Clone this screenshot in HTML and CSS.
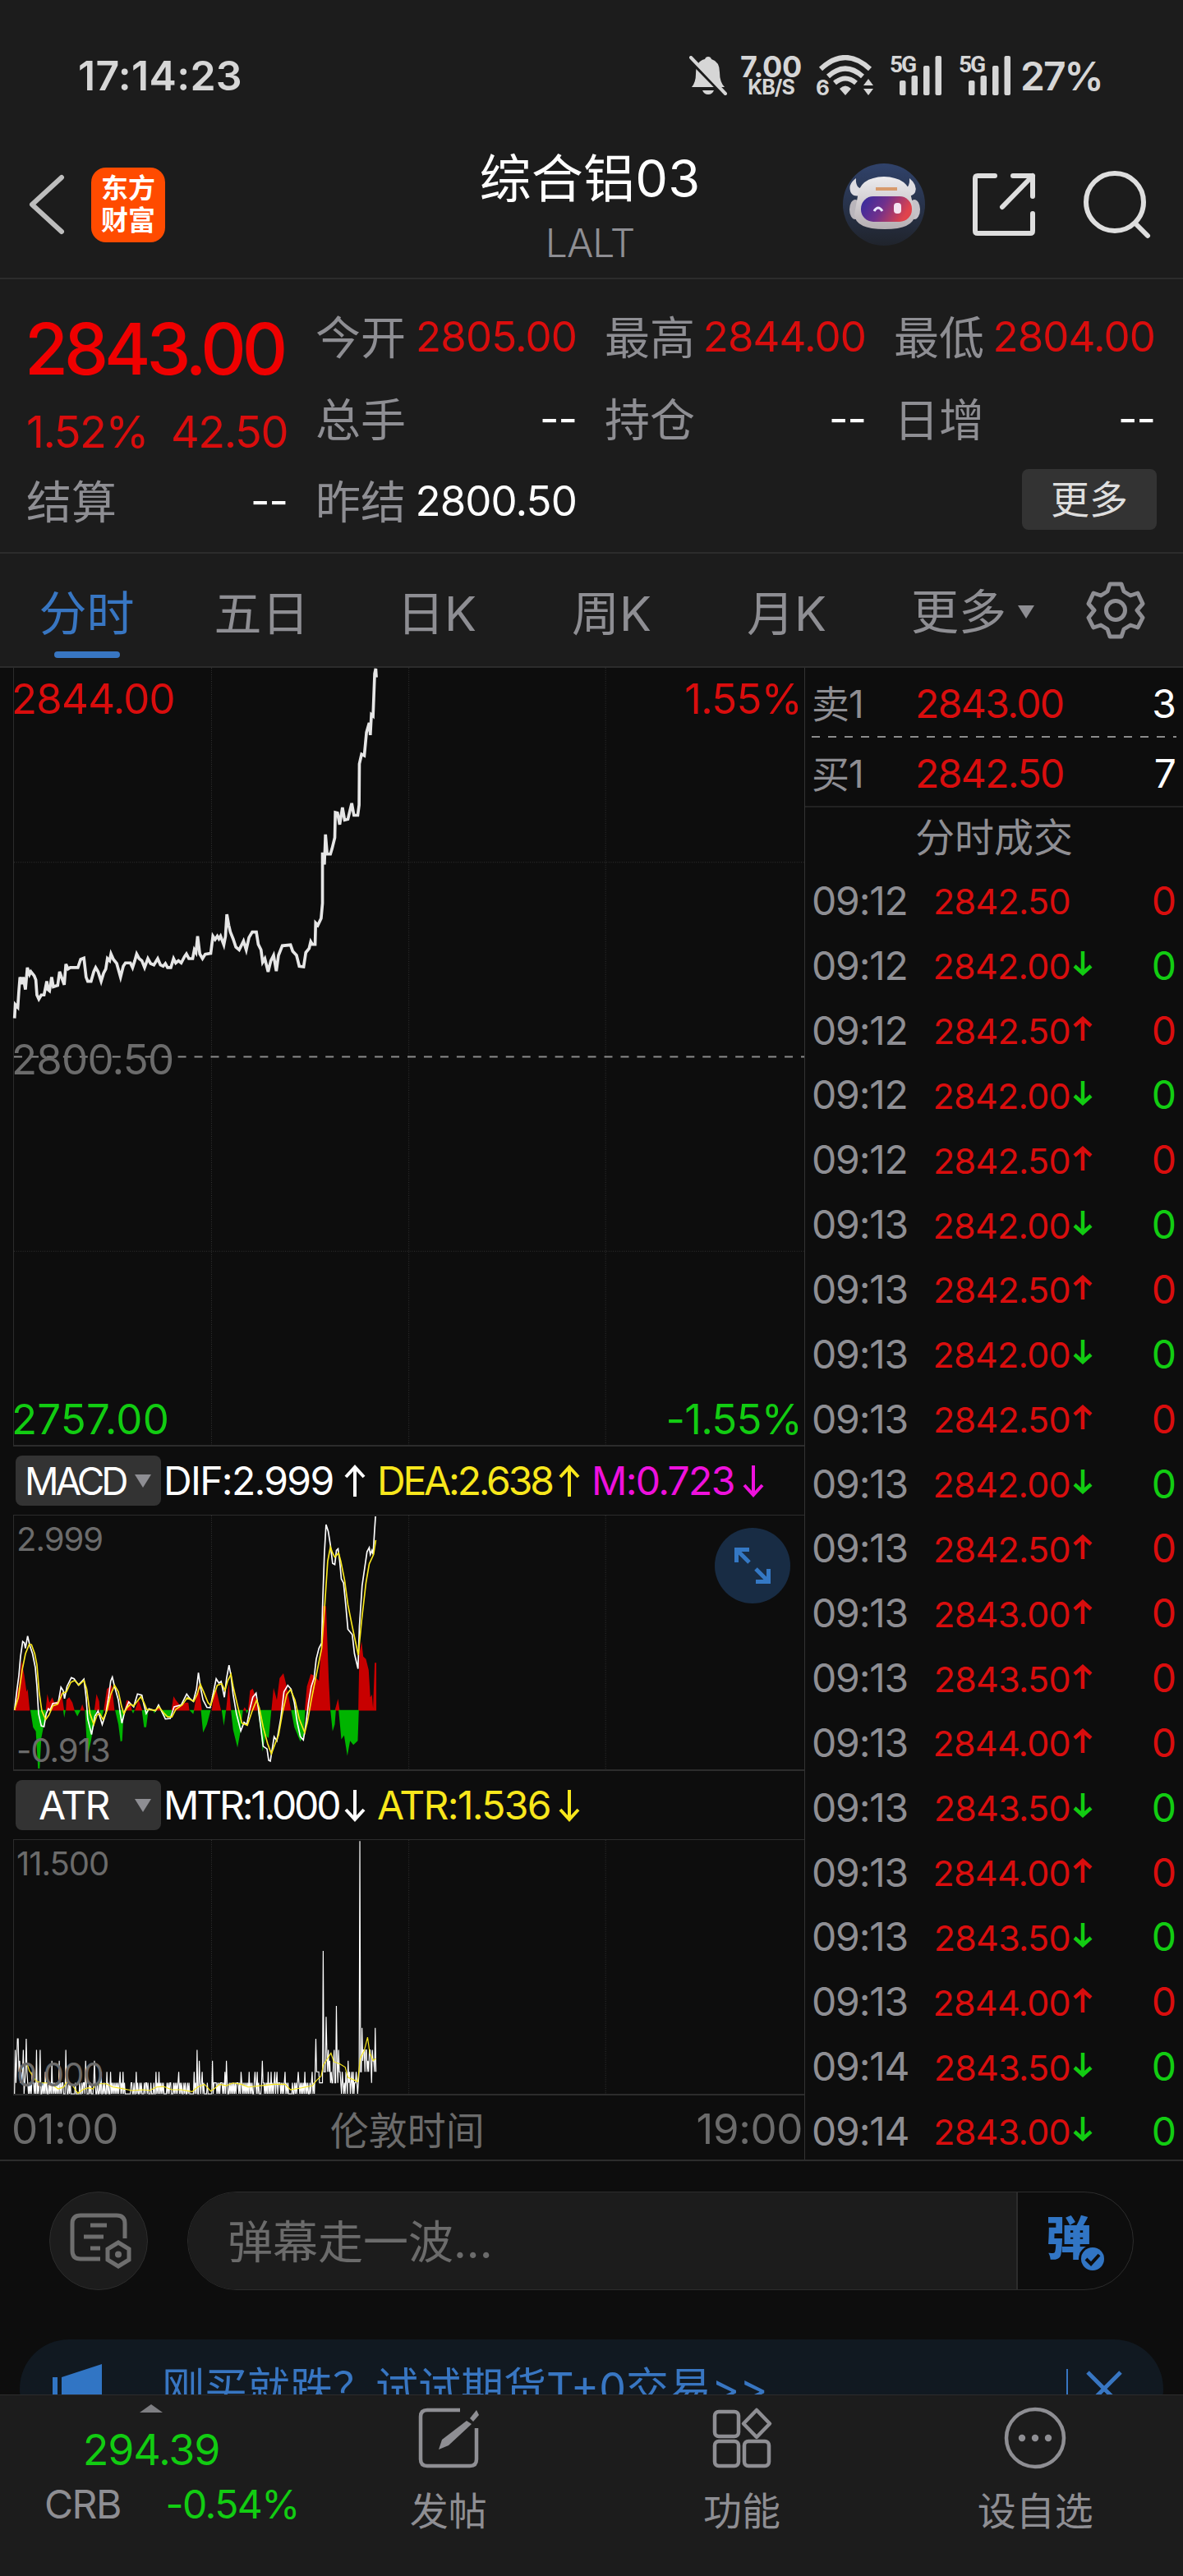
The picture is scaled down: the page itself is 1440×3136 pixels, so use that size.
FILE: index.html
```html
<!DOCTYPE html>
<html lang="zh-CN">
<head>
    <meta charset="UTF-8">
    <meta name="viewport" content="width=device-width, initial-scale=1.0">
    <title>综合铝03 - LALT</title>
    <link rel="stylesheet" href="styles.css">
</head>
<body>

    <div class="status-bar">
        <span class="clock">17:14:23</span>
        <div class="status-icons">
            <svg class="bell" width="46" height="48" viewBox="0 0 46 48">
                <path d="M3 38 Q8 32 8 22 Q8 6 19 4 Q20 1 23 1 Q26 1 27 4 Q37 7 37 20 Q37 32 43 38 Z" fill="#d6d6d6"/>
                <path d="M16 42 H30 Q28 47 23 47 Q18 47 16 42 Z" fill="#d6d6d6"/>
                <path d="M1 -3 L46 43" stroke="#1c1c1c" stroke-width="5" transform="translate(-3 5)"/>
                <path d="M2 2 L44 46" stroke="#d6d6d6" stroke-width="4" stroke-linecap="round"/>
            </svg>
            <div class="net-speed">
                <span class="speed">7.00</span>
                <span class="unit">KB/S</span>
            </div>
            <div class="wifi">
                <span>6</span>
                <svg width="70" height="50" viewBox="0 0 70 50" fill="none" stroke="#d6d6d6" stroke-width="6">
                    <path d="M4 17 Q34 -11 64 17"/>
                    <path d="M13 26 Q34 7 55 26"/>
                    <path d="M21 34 Q34 23 47 34"/>
                    <path d="M27 41 Q34 34 41 41 L34 49 Z" fill="#d6d6d6" stroke="none"/>
                    <path d="M62 29 L68 37 H56 Z M62 49 L68 41 H56 Z" fill="#d6d6d6" stroke="none"/>
                </svg>
            </div>
            <div class="signal">
                <span>5G</span>
                <svg width="52" height="48" viewBox="0 0 52 48" fill="#d6d6d6">
                    <rect x="0" y="30" width="7.500" height="18" rx="2"/><rect x="14.500" y="24" width="7.500" height="24" rx="2"/>
                    <rect x="29" y="12" width="7.500" height="36" rx="2"/><rect x="43.500" y="0" width="7.500" height="48" rx="2"/>
                </svg>
            </div>
            <div class="signal">
                <span>5G</span>
                <svg width="52" height="48" viewBox="0 0 52 48" fill="#d6d6d6">
                    <rect x="0" y="30" width="7.500" height="18" rx="2"/><rect x="14.500" y="24" width="7.500" height="24" rx="2"/>
                    <rect x="29" y="12" width="7.500" height="36" rx="2"/><rect x="43.500" y="0" width="7.500" height="48" rx="2"/>
                </svg>
            </div>
            <span class="battery">27%</span>
        </div>
    </div>

    <header class="header">
        <div class="header-left">
            <svg width="46" height="76" viewBox="0 0 46 76" fill="none" stroke="#bdbdbd" stroke-width="6" stroke-linecap="round" stroke-linejoin="round">
                <path d="M41 5 L5 38 L41 71"/>
            </svg>
            <div class="logo"><span>东方</span><span>财富</span></div>
        </div>
        <div class="header-title">
            <h1>综合铝03</h1>
            <p>LALT</p>
        </div>
        <div class="header-right">
            <svg width="100" height="100" viewBox="0 0 100 100">
                <defs>
                    <linearGradient id="sky" x1="0" y1="0" x2="0" y2="1">
                        <stop offset="0" stop-color="#30426a"/><stop offset="1" stop-color="#20242c"/>
                    </linearGradient>
                    <linearGradient id="visor" x1="0" y1="0" x2="1" y2="0.300">
                        <stop offset="0" stop-color="#2f2ba0"/><stop offset="0.500" stop-color="#70308c"/><stop offset="1" stop-color="#e0434c"/>
                    </linearGradient>
                    <linearGradient id="shell" x1="0" y1="0" x2="0" y2="1">
                        <stop offset="0" stop-color="#ecebee"/><stop offset="1" stop-color="#b5aeb2"/>
                    </linearGradient>
                </defs>
                <circle cx="50" cy="50" r="50" fill="url(#sky)"/>
                <path d="M16 18 Q5 26 10 36 Q14 42 24 38 L24 31 Q15 30 16 18 Z M81 18 Q91 26 88 35 Q84 42 74 38 L74 31 Q82 30 81 18 Z" fill="#dddce2"/>
                <ellipse cx="15" cy="56" rx="7" ry="12" fill="#b9b5bb"/>
                <ellipse cx="87" cy="56" rx="7" ry="12" fill="#c6c2c8"/>
                <path d="M18 40 Q20 17 50 16 Q80 17 83 40 L88 62 Q86 80 51 80 Q15 80 14 62 Z" fill="url(#shell)"/>
                <path d="M40 31 H66" stroke="#d79a6c" stroke-width="4"/>
                <rect x="22" y="40" width="62" height="31" rx="15" fill="url(#visor)"/>
                <path d="M38 58 Q43 50 48 58" fill="none" stroke="#e8e6ff" stroke-width="3"/>
                <rect x="62" y="48" width="9" height="13" rx="4" fill="#f4e4f2"/>
            </svg>
            <svg width="80" height="80" viewBox="0 0 80 80" fill="none" stroke="#dedede" stroke-width="6" stroke-linecap="round" stroke-linejoin="round">
                <path d="M29 5 H8 Q5 5 5 8 V72 Q5 75 8 75 H72 Q75 75 75 72 V51"/>
                <path d="M51 5 H75 V30 M75 5 L38 43"/>
            </svg>
            <svg width="84" height="84" viewBox="0 0 84 84" fill="none" stroke="#dedede" stroke-width="6" stroke-linecap="round">
                <circle cx="39" cy="39" r="35"/>
                <path d="M64 65 L79 80"/>
            </svg>
        </div>
    </header>

    <section class="quote">
        <div class="price-main">
            <strong>2843.00</strong>
            <div class="change"><span>1.52%</span><span>42.50</span></div>
        </div>
        <div class="cell"><label>今开</label><span class="red">2805.00</span></div>
        <div class="cell"><label>最高</label><span class="red">2844.00</span></div>
        <div class="cell"><label>最低</label><span class="red">2804.00</span></div>
        <div class="cell"><label>总手</label><span>--</span></div>
        <div class="cell"><label>持仓</label><span>--</span></div>
        <div class="cell"><label>日增</label><span>--</span></div>
        <div class="cell"><label>结算</label><span>--</span></div>
        <div class="cell"><label>昨结</label><span>2800.50</span></div>
        <button class="more-btn">更多</button>
    </section>

    <nav class="tabs">
        <a class="tab active">分时</a>
        <a class="tab">五日</a>
        <a class="tab">日K</a>
        <a class="tab">周K</a>
        <a class="tab">月K</a>
        <a class="tab tab-more">更多<i class="caret"></i></a>
        <svg class="gear" width="72" height="72" viewBox="0 0 72 72" fill="none" stroke="#8e8e93" stroke-width="5" stroke-linejoin="round">
            <path d="M29 4 H43 L46 13 L54 18 L63 15 L69 28 L62 36 L69 45 L63 57 L54 54 L46 59 L43 68 H29 L26 59 L18 54 L9 57 L3 45 L10 36 L3 28 L9 15 L18 18 L26 13 Z"/>
            <circle cx="36" cy="36" r="11.500"/>
        </svg>
    </nav>

    <main class="board">
        <div class="charts">
            <div class="plot plot-price">
                <svg viewBox="48 9 2892 2841" preserveAspectRatio="none">
                    <path class="grid" d="M771 9 V2850 M1493 9 V2850 M2213 9 V2850 M48 720 H2940 M48 2142 H2940"/>
                    <path class="base" d="M48 1431 H2940"/>
                    <polyline class="price-line" points="50,1290 53,1240 62,1250 66,1190 70,1140 78,1165 82,1140 90,1185 97,1105 105,1130 110,1120 122,1135 128,1150 132,1205 139,1220 148,1205 158,1205 168,1155 172,1185 178,1190 186,1140 192,1175 208,1170 215,1120 222,1140 232,1168 238,1092 246,1110 254,1105 282,1105 292,1075 304,1070 312,1140 318,1155 330,1155 340,1120 347,1105 356,1120 367,1155 376,1125 384,1110 390,1072 398,1080 403,1055 412,1075 424,1090 438,1140 448,1100 456,1088 474,1088 482,1105 490,1080 497,1055 506,1072 516,1080 526,1105 538,1072 548,1090 560,1095 574,1072 584,1095 594,1100 602,1090 610,1105 622,1105 632,1072 640,1088 650,1080 660,1088 672,1065 679,1055 688,1072 702,1072 708,1040 714,1050 720,990 728,1055 738,1072 748,1056 768,1053 776,990 784,1002 792,990 798,1000 804,990 816,1022 822,990 827,910 834,950 840,975 850,1000 860,1030 872,1040 888,1008 898,1040 908,995 920,975 935,975 942,1020 952,1040 958,1085 966,1072 978,1120 988,1080 998,1060 1008,1118 1016,1060 1030,1025 1060,1022 1068,1045 1082,1060 1092,1100 1108,1102 1116,1050 1128,1035 1134,1010 1140,1020 1150,1020 1152,942 1160,950 1172,925 1177,870 1177,684 1184,728 1188,618 1194,690 1206,690 1212,670 1222,630 1224,538 1232,540 1240,582 1250,520 1258,565 1270,562 1284,504 1292,548 1306,548 1311,510 1312,360 1320,325 1330,330 1338,245 1348,210 1352,255 1356,180 1362,185 1368,30 1372,12 1374,44"/>
                </svg>
                <span class="mark top-left red">2844.00</span>
                <span class="mark top-right red">1.55%</span>
                <span class="mark mid-left">2800.50</span>
                <span class="mark bottom-left green">2757.00</span>
                <span class="mark bottom-right green">-1.55%</span>
            </div>

            <div class="indicator">
                <div class="picker picker-macd">MACD<i class="caret"></i></div>
                <span class="val v1">DIF:2.999</span>
                <svg class="arrow" viewBox="0 0 26 40"><path d="M13 39 V3 M2 15 L13 3 L24 15"/></svg>
                <span class="val v2 tight yellow">DEA:2.638</span>
                <svg class="arrow yellow" viewBox="0 0 26 40"><path d="M13 39 V3 M2 15 L13 3 L24 15"/></svg>
                <span class="val v3 pink">M:0.723</span>
                <svg class="arrow pink" viewBox="0 0 26 40"><path d="M13 1 V37 M2 25 L13 37 L24 25"/></svg>
            </div>
            <div class="plot plot-sub">
                <svg viewBox="48 12 2892 933" preserveAspectRatio="none">
                    <path class="grid" d="M771 12 V945 M1493 12 V945 M2213 12 V945"/>
                    <path fill="#c80000" d="M50 729 L58 660 66 640 76 545 86 600 94 660 98 650 106 729 Z M164 729 L170 668 178 700 188 680 196 700 214 690 218 650 226 690 232 729 Z M238 729 L240 690 250 680 262 700 270 729 Z M290 729 L298 706 306 729 Z M342 729 L350 668 360 695 362 729 Z M376 729 L388 650 406 635 416 729 Z M452 729 L460 690 472 695 480 729 Z M490 729 L504 690 518 729 Z M570 729 L577 712 584 729 Z M624 729 L632 676 640 690 656 710 676 700 686 700 690 729 Z M706 729 L723 635 732 700 736 729 Z M772 729 L780 660 788 650 806 729 Z M824 729 L834 630 842 729 Z M886 729 L892 716 900 729 Z M904 729 L912 655 922 648 936 690 940 729 Z M990 729 L998 645 1010 690 1020 610 1034 592 1046 640 1062 729 Z M1112 729 L1120 640 1134 595 1146 600 1164 620 1172 500 1178 345 1190 345 1200 620 1206 729 Z M1222 729 L1234 685 1240 729 Z M1308 729 L1312 520 1320 475 1326 530 1336 540 1346 580 1352 680 1358 670 1362 720 1368 553 1374 553 1374 729 Z"/>
                    <path fill="#00b400" d="M108 727 L118 790 128 805 136 942 142 942 148 830 160 770 166 727 Z M228 727 L232 755 237 727 Z M268 727 L280 750 292 727 Z M308 727 L314 840 320 885 330 840 340 780 350 727 Z M362 727 L368 760 376 727 Z M418 727 L430 780 438 843 444 840 450 727 Z M478 727 L484 740 490 727 Z M516 727 L524 790 532 790 540 727 Z M556 727 L562 740 568 727 Z M584 727 L596 750 620 755 626 727 Z M690 727 L704 742 708 727 Z M732 727 L740 810 754 780 768 727 Z M808 727 L816 785 824 727 Z M842 727 L850 800 866 865 876 810 886 727 Z M896 727 L900 740 906 727 Z M940 727 L950 800 958 880 968 820 980 830 990 727 Z M1062 727 L1074 790 1096 843 1108 820 1114 727 Z M1206 727 L1214 805 1222 780 1226 727 Z M1236 727 L1246 835 1256 820 1268 895 1278 840 1290 855 1306 840 1310 727 Z"/>
                    <polyline class="line-white" points="50,727 58,660 66,600 72,530 80,475 86,480 90,500 98,455 106,490 116,520 126,570 132,640 138,740 148,785 158,788 166,740 174,722 180,728 190,703 210,700 220,643 228,655 233,685 242,640 258,608 268,612 284,635 304,613 312,680 318,760 332,817 344,750 356,730 371,780 384,740 394,680 402,620 408,606 416,640 430,690 437,740 443,775 454,730 468,697 486,715 500,668 516,672 524,710 532,740 542,722 566,730 577,708 590,735 602,760 620,758 634,715 660,708 680,668 692,685 704,695 716,650 723,590 730,640 740,690 754,717 766,718 774,680 788,612 798,628 806,622 818,680 826,610 835,562 842,600 850,670 862,740 878,804 890,772 900,780 912,720 922,680 934,665 942,720 950,780 960,860 974,870 980,912 986,915 1000,825 1010,840 1024,760 1036,660 1050,636 1062,650 1074,700 1084,770 1096,825 1107,837 1116,780 1126,700 1136,640 1146,610 1154,540 1164,500 1174,480 1177,350 1184,150 1190,45 1198,70 1206,120 1214,188 1222,192 1228,140 1234,134 1240,180 1246,245 1254,260 1262,340 1270,430 1286,450 1294,520 1307,575 1312,420 1322,270 1332,200 1340,145 1348,130 1352,155 1358,140 1362,155 1368,60 1371,15"/>
                    <polyline class="line-yellow" points="50,727 64,680 78,580 90,520 104,485 112,487 124,520 132,560 140,660 150,730 164,762 176,745 190,712 208,705 226,665 240,660 256,625 270,618 286,635 304,618 314,650 326,740 340,780 352,745 362,740 374,762 388,730 402,670 416,636 430,660 442,715 450,740 462,718 474,706 486,712 512,678 524,700 534,725 566,728 578,715 594,735 610,752 626,752 640,725 664,708 682,682 706,695 718,670 730,632 742,660 758,700 768,710 780,670 792,636 808,630 820,655 830,620 842,595 850,640 866,710 882,775 902,783 918,735 936,690 946,720 960,790 976,850 990,888 1004,850 1016,820 1030,740 1046,670 1060,652 1076,690 1092,760 1112,810 1122,770 1136,690 1150,620 1162,560 1174,500 1186,330 1196,180 1206,128 1214,150 1222,165 1236,150 1244,180 1258,250 1270,340 1286,420 1308,525 1320,400 1336,260 1348,190 1364,155 1372,102"/>
                </svg>
                <span class="mark small sub-top">2.999</span>
                <span class="mark small sub-bottom">-0.913</span>
                <div class="expand">
                    <svg width="48" height="48" viewBox="0 0 48 48" fill="none" stroke="#3478c4" stroke-width="5">
                        <path d="M20 4.500 H4.500 V20 M4.500 4.500 L20 20 M28 43.500 H43.500 V28 M43.500 43.500 L28 28"/>
                    </svg>
                </div>
            </div>

            <div class="indicator">
                <div class="picker picker-atr">ATR<i class="caret"></i></div>
                <span class="val v1 tight">MTR:1.000</span>
                <svg class="arrow" viewBox="0 0 26 40"><path d="M13 1 V37 M2 25 L13 37 L24 25"/></svg>
                <span class="val v2 yellow">ATR:1.536</span>
                <svg class="arrow yellow" viewBox="0 0 26 40"><path d="M13 1 V37 M2 25 L13 37 L24 25"/></svg>
            </div>
            <div class="plot plot-sub">
                <svg viewBox="48 -3 2892 933" preserveAspectRatio="none">
                    <path class="grid" d="M771 -3 V930 M1493 -3 V930 M2213 -3 V930"/>
                    <polyline id="mtr" class="line-white thin" points=""/>
                    <polyline class="line-yellow thin" points="90,822 98,825 104,845 120,870 132,885 150,890 176,890 190,898 210,912 230,905 240,888 252,890 266,905 282,928 300,915 320,908 336,912 345,900 362,893 385,893 410,905 440,910 480,918 520,915 545,918 570,905 595,903 625,915 660,915 700,922 720,905 745,895 768,920 785,908 800,895 825,900 850,890 880,895 905,905 950,900 1000,895 1040,895 1060,915 1100,908 1140,900 1156,880 1172,865 1180,825 1208,780 1218,812 1240,820 1260,832 1270,870 1306,885 1315,800 1330,770 1342,722 1350,780 1362,808 1372,800"/>
                </svg>
                <span class="mark small sub-top">11.500</span>
                <span class="mark small sub-bottom">0.000</span>
            </div>
            <div class="time-axis"><span>01:00</span><span>伦敦时间</span><span>19:00</span></div>
        </div>

        <aside class="ticks">
            <div class="order"><label>卖1</label><span class="red">2843.00</span><b>3</b></div>
            <svg class="dash" width="460" height="2"><path d="M8 1 H452" stroke="#8c8c8c" stroke-width="2" stroke-dasharray="10 10"/></svg>
            <div class="order"><label>买1</label><span class="red">2842.50</span><b>7</b></div>
            <h2>分时成交</h2>
            <div id="tick-list"></div>
        </aside>
    </main>

    <section class="feed">
        <div class="danmu">
            <div class="danmu-set">
                <svg width="76" height="70" viewBox="0 0 76 70" fill="none" stroke="#6e6e6e" stroke-width="5">
                    <path d="M38 57 H14 Q4 57 4 47 V14 Q4 4 14 4 H58 Q68 4 68 14 V32"/>
                    <path d="M26 16 H46 M18 30 H42 M26 44 H38"/>
                    <path d="M60 37 L73 45 V58 L60 66 L47 58 V45 Z"/>
                    <circle cx="60" cy="51.500" r="4" fill="#6e6e6e" stroke="none"/>
                </svg>
            </div>
            <div class="danmu-box">
                <div class="danmu-input">弹幕走一波...</div>
                <div class="danmu-switch">
                    <span>弹</span>
                    <svg width="34" height="34" viewBox="0 0 34 34">
                        <circle cx="17" cy="17" r="17" fill="#0d0d0d"/>
                        <circle cx="17" cy="17" r="14" fill="#3175c4"/>
                        <path d="M9 17 L15 23 L25 12" fill="none" stroke="#0d0d0d" stroke-width="4"/>
                    </svg>
                </div>
            </div>
        </div>
        <div class="notice">
            <svg class="horn" width="60" height="60" viewBox="0 0 60 60" fill="#3175c4">
                <path d="M0 16 H6 V50 H0 Z M11 16 L60 0 V60 L11 46 Z"/>
            </svg>
            <p>刚买就跌？试试期货T+0交易&gt;&gt;</p>
            <i class="split"></i>
            <svg width="44" height="44" viewBox="0 0 44 44" stroke="#3876c2" stroke-width="5"><path d="M2 2 L42 42 M42 2 L2 42"/></svg>
        </div>
    </section>

    <footer class="bottom-nav">
        <div class="index">
            <i class="caret-up"></i>
            <strong>294.39</strong>
            <div><label>CRB</label><span>-0.54%</span></div>
        </div>
        <a>
            <svg width="76" height="76" viewBox="0 0 76 76" fill="none" stroke="#8e8e93" stroke-width="4.500">
                <path d="M52 4 H12 Q4 4 4 12 V64 Q4 72 12 72 H64 Q72 72 72 64 V26"/>
                <path d="M60 17 L66 21 L38 47 L26 52 L30 40 Z" fill="#8e8e93" stroke="none"/>
                <path d="M64 14 L72 4 L75 10 L68 18 Z" fill="#8e8e93" stroke="none"/>
            </svg>
            <span>发帖</span>
        </a>
        <a>
            <svg width="76" height="76" viewBox="0 0 76 76" fill="none" stroke="#8e8e93" stroke-width="4.500">
                <rect x="5" y="6" width="29" height="30" rx="5"/>
                <rect x="5" y="42" width="29" height="30" rx="5"/>
                <rect x="41" y="42" width="30" height="30" rx="5"/>
                <path d="M56 4 L72 20.500 L56 37 L40 20.500 Z" stroke-linejoin="round"/>
            </svg>
            <span>功能</span>
        </a>
        <a>
            <svg width="76" height="76" viewBox="0 0 76 76" fill="#8e8e93">
                <circle cx="38" cy="38" r="35" fill="none" stroke="#8e8e93" stroke-width="4.500"/>
                <circle cx="22" cy="38" r="4.200"/><circle cx="38" cy="38" r="4.200"/><circle cx="54" cy="38" r="4.200"/>
            </svg>
            <span>设自选</span>
        </a>
    </footer>

    <script src="script.js"></script>
</body>
</html>
```

FILE: styles.css
```css
* {
    box-sizing: border-box;
}

body {
    margin: 0;
    width: 1440px;
    height: 3136px;
    overflow: hidden;
    background-color: #0d0d0d;
    color: #fff;
    font-family: Inter, "Noto Sans CJK SC", sans-serif;
    font-size: 48px;
    font-weight: 400;
    white-space: nowrap;
}

h1, h2, p {
    margin: 0;
    font-weight: 400;
}

svg {
    display: block;
    flex: none;
}

.red {
    color: #d90d0d;
}

.green {
    color: #12cc12;
}

.yellow {
    color: #f8e71c;
}

.pink {
    color: #ee11dd;
}

/* status bar */
.status-bar {
    height: 186px;
    padding: 0 98px 2px 95px;
    display: flex;
    align-items: center;
    justify-content: space-between;
    background-color: #1c1c1c;
    color: #d6d6d6;
}

.clock {
    font-size: 50px;
    font-weight: 600;
    letter-spacing: 0.3px;
}

.status-icons {
    display: flex;
    align-items: center;
}

.net-speed {
    width: 77px;
    margin-left: 15px;
    display: flex;
    flex-direction: column;
    align-items: center;
    font-weight: 700;
}

.speed {
    font-size: 36px;
    line-height: 28px;
    letter-spacing: -0.2px;
}

.unit {
    font-size: 25px;
    line-height: 23px;
    letter-spacing: -1px;
}

.wifi {
    width: 72px;
    margin-left: 16px;
    display: flex;
    align-items: flex-end;
}

.wifi span {
    width: 2px;
    font-size: 26px;
    font-weight: 700;
    line-height: 20px;
}

.signal {
    width: 63px;
    height: 48px;
    margin-left: 19px;
    display: flex;
    justify-content: flex-end;
}

.signal + .signal {
    margin-left: 21px;
}

.signal span {
    width: 12px;
    font-family: Roboto, sans-serif;
    font-size: 28px;
    font-weight: 700;
    line-height: 22px;
    letter-spacing: -2px;
}

.battery {
    width: 100px;
    margin-left: 11px;
    font-size: 48px;
    font-weight: 600;
    letter-spacing: -2px;
}

/* title bar */
.header {
    height: 154px;
    padding: 0 38px 26px 34px;
    display: grid;
    grid-template-columns: 410px 1fr 410px;
    grid-template-rows: 126px;
    align-items: center;
    background-color: #1c1c1c;
    border-bottom: 2px solid #2c2c2c;
}

.header-left {
    display: flex;
    align-items: center;
    gap: 31px;
}

.logo {
    width: 90px;
    height: 91px;
    border-radius: 18px;
    background-color: #ff4b00;
    display: flex;
    flex-direction: column;
    align-items: center;
    justify-content: center;
    font-size: 33px;
    font-weight: 700;
    line-height: 39px;
}

.header-title {
    align-self: center;
    text-align: center;
}

.header-title h1 {
    font-size: 63px;
    line-height: 94px;
    letter-spacing: 0.3px;
}

.header-title p {
    font-size: 48px;
    line-height: 64px;
    font-weight: 300;
    letter-spacing: -1px;
    color: #8e8e93;
}

.header-right {
    display: flex;
    align-items: center;
    justify-content: flex-end;
    gap: 56px;
}

/* quote panel */
.quote {
    height: 334px;
    padding: 19px 34px 0 32px;
    display: grid;
    grid-template-columns: 318px repeat(3, 318px);
    grid-template-rows: repeat(3, 100px);
    column-gap: 34px;
    background-color: #1c1c1c;
    border-bottom: 2px solid #2c2c2c;
}

.price-main {
    grid-row: span 2;
    color: #ef0000;
}

.price-main strong {
    display: block;
    margin-left: -2px;
    font-size: 86px;
    font-weight: 500;
    line-height: 133px;
    letter-spacing: -5px;
}

.change {
    display: flex;
    justify-content: space-between;
    font-size: 54px;
    line-height: 67px;
    letter-spacing: -1.5px;
    color: #d90d0d;
}

.cell {
    display: flex;
    align-items: center;
    justify-content: space-between;
    font-size: 51px;
    letter-spacing: -0.9px;
}

.cell label {
    margin-top: -4px;
    font-size: 55px;
    letter-spacing: 0;
    color: #8e8e93;
}

.more-btn {
    grid-column: 4;
    justify-self: end;
    align-self: center;
    width: 164px;
    height: 74px;
    margin-top: -3px;
    margin-right: -2px;
    padding: 0;
    border: none;
    border-radius: 8px;
    background-color: #333;
    color: #dedede;
    font: inherit;
    font-size: 47px;
    line-height: 70px;
}

/* period tabs */
.tabs {
    height: 139px;
    display: flex;
    align-items: center;
    background-color: #1c1c1c;
    border-bottom: 2px solid #2c2c2c;
}

.tab {
    width: 213px;
    height: 137px;
    padding-right: 2px;
    display: flex;
    flex-direction: column;
    align-items: center;
    font-size: 58px;
    line-height: 146px;
    color: #8e8e93;
}

.active {
    color: #3876c2;
}

.active::after {
    content: "";
    width: 80px;
    height: 8px;
    margin-top: -27px;
    border-radius: 4px;
    background-color: #3876c2;
}

.tab-more {
    width: 240px;
    padding-top: 4px;
    flex-direction: row;
    justify-content: center;
    gap: 14px;
}

.caret {
    border: 10px solid transparent;
    border-top: 16px solid #8e8e93;
    border-bottom: none;
}

.gear {
    margin-left: 17px;
}

/* charts */
.board {
    height: 1818px;
    display: flex;
    border-bottom: 2px solid #2c2c2c;
}

.charts {
    width: 980px;
    padding-left: 16px;
    border-right: 1px solid #333;
}

.plot {
    position: relative;
    border-left: 1px solid #2c2c2c;
    border-bottom: 2px solid #2c2c2c;
}

.plot > svg {
    width: 100%;
    height: 100%;
    overflow: visible;
}

.plot-price {
    height: 948px;
}

.plot-sub {
    height: 312px;
    border-top: 1px solid #2c2c2c;
}

.grid {
    fill: none;
    stroke: #333;
    stroke-width: 3;
    stroke-dasharray: 3 5;
}

.base {
    stroke: #8c8c8c;
    stroke-width: 6;
    stroke-dasharray: 30 30;
}

.price-line {
    fill: none;
    stroke: #e6e6e6;
    stroke-width: 11;
}

.line-white {
    fill: none;
    stroke: #fff;
    stroke-width: 5;
}

.line-yellow {
    fill: none;
    stroke: #f8e71c;
    stroke-width: 5;
}

.thin {
    stroke-width: 3.5;
}

.mark {
    position: absolute;
    font-size: 51px;
    line-height: 60px;
    letter-spacing: -0.8px;
    color: #6b6b6b;
}

.mark.red {
    color: #d90d0d;
}

.mark.green {
    color: #12cc12;
}

.top-left {
    top: 8px;
    left: -3px;
}

.top-right {
    top: 8px;
    right: 3px;
}

.mid-left {
    top: 447px;
    left: -3px;
}

.bottom-left {
    bottom: 1px;
    left: -3px;
    letter-spacing: 0.2px;
}

.bottom-right {
    bottom: 1px;
    right: 3px;
}

.mark.small {
    left: 3px;
    font-size: 40px;
    line-height: 40px;
    letter-spacing: -1px;
}

.sub-top {
    top: 9px;
}

.sub-bottom {
    bottom: 3px;
}

.expand {
    position: absolute;
    top: 15px;
    right: 17px;
    width: 92px;
    height: 92px;
    border-radius: 50%;
    background-color: #182c44;
    display: flex;
    align-items: center;
    justify-content: center;
}

.indicator {
    height: 83px;
    padding-left: 3px;
    display: flex;
    align-items: center;
    font-size: 48px;
    letter-spacing: -1.7px;
}

.picker {
    width: 177px;
    height: 61px;
    padding: 0 12px 0 13px;
    display: flex;
    align-items: center;
    justify-content: space-between;
    border-radius: 8px;
    background-color: #333;
}

.picker-macd {
    padding-left: 11px;
    font-size: 46px;
    letter-spacing: -4px;
}

.picker-atr {
    padding-left: 28px;
}

.v1 {
    width: 218px;
    padding-left: 3px;
    margin-right: 5px;
}

.v2 {
    width: 221px;
    margin-left: 14px;
}

.v3 {
    width: 184px;
    margin-left: 14px;
}

.tight {
    letter-spacing: -3.2px;
}

.arrow {
    width: 26px;
    height: 40px;
    fill: none;
    stroke: currentColor;
    stroke-width: 4;
}

.time-axis {
    height: 80px;
    padding-right: 2px;
    display: flex;
    align-items: center;
    justify-content: space-between;
    margin-left: -2px;
    font-size: 51px;
    letter-spacing: -0.4px;
    color: #6b6b6b;
}

.time-axis span:nth-child(2) {
    margin-top: -2px;
    font-size: 47px;
    letter-spacing: 0;
}

/* order book and trades */
.ticks {
    width: 460px;
}

.order, .tick {
    display: flex;
    align-items: center;
    padding: 0 8px;
    letter-spacing: -2px;
}

.order {
    height: 83px;
    padding-top: 3px;
}

.order label {
    width: 126px;
    margin-top: -4px;
    font-size: 46px;
    letter-spacing: -1px;
    color: #8e8e93;
}

.order span {
    letter-spacing: -1.6px;
}

.order b, .tick b {
    margin-left: auto;
    font-weight: 400;
    letter-spacing: 0;
}

.ticks h2 {
    height: 76px;
    border-top: 2px solid #222;
    text-align: center;
    font-size: 48px;
    line-height: 74px;
    color: #8e8e93;
}

.tick {
    height: 78.85px;
}

.tick time {
    width: 130px;
    letter-spacing: -1.2px;
    color: #8e8e93;
}

.tick .deal {
    width: 185px;
    padding-top: 2px;
    text-align: right;
    font-size: 43px;
    letter-spacing: -0.7px;
}

.tick svg {
    margin: -4px 0 0 3px;
    fill: none;
    stroke: currentColor;
    stroke-width: 4.5;
}

/* danmu bar and notice */
.feed {
    height: 284px;
    overflow: hidden;
}

.danmu {
    padding: 37px 60px 0;
    display: flex;
    gap: 48px;
}

.danmu-set {
    width: 120px;
    height: 120px;
    padding-left: 3px;
    border: 1px solid #2c2c2c;
    border-radius: 50%;
    background-color: #1c1c1c;
    display: flex;
    align-items: center;
    justify-content: center;
}

.danmu-box {
    flex: 1;
    height: 120px;
    border: 1px solid #2c2c2c;
    border-radius: 60px;
    overflow: hidden;
    display: flex;
}

.danmu-input {
    width: 1010px;
    padding-left: 48px;
    border-right: 2px solid #2c2c2c;
    background-color: #1c1c1c;
    font-size: 55px;
    line-height: 121px;
    color: #6b6b6b;
}

.danmu-switch {
    position: relative;
    padding-left: 34px;
    font-size: 56px;
    font-weight: 900;
    line-height: 112px;
    color: #3175c4;
}

.danmu-switch svg {
    position: absolute;
    left: 74px;
    top: 64px;
}

.notice {
    height: 120px;
    margin: 60px 24px 0;
    padding: 0 50px 0 40px;
    border-radius: 60px;
    background-color: #111921;
    display: flex;
    align-items: center;
    color: #3876c2;
}

.notice p {
    flex: 1;
    margin-left: 73px;
    font-size: 52px;
    line-height: 110px;
}

.split {
    width: 2px;
    height: 48px;
    margin-right: 22px;
    background-color: #3876c2;
}

/* bottom bar */
.bottom-nav {
    height: 221px;
    display: flex;
    background-color: #1c1c1c;
    border-top: 1px solid #2c2c2c;
    color: #8e8e93;
}

.bottom-nav a {
    flex: 1;
    padding-top: 14px;
    padding-right: 2px;
    display: flex;
    flex-direction: column;
    align-items: center;
    font-size: 47px;
    line-height: 102px;
}

.index {
    width: 368px;
    padding-top: 11px;
    display: flex;
    flex-direction: column;
    align-items: center;
    color: #12cc12;
}

.caret-up {
    border: 14px solid transparent;
    border-bottom: 10px solid #7e7e82;
    border-top: none;
}

.index strong {
    font-size: 52px;
    font-weight: 400;
    line-height: 92px;
    letter-spacing: -1.2px;
}

.index div {
    width: 310px;
    margin-left: 50px;
    display: flex;
    justify-content: space-between;
    font-size: 48px;
    line-height: 40px;
    letter-spacing: -1.5px;
}

.index label {
    color: #8e8e93;
}
```

FILE: script.js
```js
// true range per minute, one base-36 digit each, in half points
const mtr =
    "04135523121240125210101021101040101400101020100101" +
    "03010101010301011000410010100000010000010010110310" +
    "00101000131001001020010100201002010101010101201020" +
    "10000000011001002010010100010110100010001002010201" +
    "01010000101011000101010120101001010010100000020104" +
    "00310120100001000000301111010101110102031001010101" +
    "01011101021010101010201010012102010001311010102010" +
    "20101201201110101012010100000100101012101010102010" +
    "100101201025222211111d2227424231211341183142210210" +
    "102103120120201121012n2263442442324431433262";

document.getElementById("mtr").setAttribute("points", mtr.split("").map((c, i) =>
    (50 + i * 2.683).toFixed(1) + "," + (930 - parseInt(c, 36) * 40.4).toFixed(1)
).join(" "));

// time, price, direction
const ticks = [
    ["09:12", "2842.50", ""],
    ["09:12", "2842.00", "down"],
    ["09:12", "2842.50", "up"],
    ["09:12", "2842.00", "down"],
    ["09:12", "2842.50", "up"],
    ["09:13", "2842.00", "down"],
    ["09:13", "2842.50", "up"],
    ["09:13", "2842.00", "down"],
    ["09:13", "2842.50", "up"],
    ["09:13", "2842.00", "down"],
    ["09:13", "2842.50", "up"],
    ["09:13", "2843.00", "up"],
    ["09:13", "2843.50", "up"],
    ["09:13", "2844.00", "up"],
    ["09:13", "2843.50", "down"],
    ["09:13", "2844.00", "up"],
    ["09:13", "2843.50", "down"],
    ["09:13", "2844.00", "up"],
    ["09:14", "2843.50", "down"],
    ["09:14", "2843.00", "down"]
];

const arrows = {
    up: "M12 30 V3 M2 12 L12 3 L22 12",
    down: "M12 0 V27 M2 18 L12 27 L22 18"
};

document.getElementById("tick-list").innerHTML = ticks.map(([time, price, dir]) => {
    const color = dir === "down" ? "green" : "red";
    const icon = dir ? `<svg class="${color}" width="24" height="30" viewBox="0 0 24 30"><path d="${arrows[dir]}"/></svg>` : "";
    return `<div class="tick"><time>${time}</time><span class="deal red">${price}</span>${icon}<b class="${color}">0</b></div>`;
}).join("");
```
